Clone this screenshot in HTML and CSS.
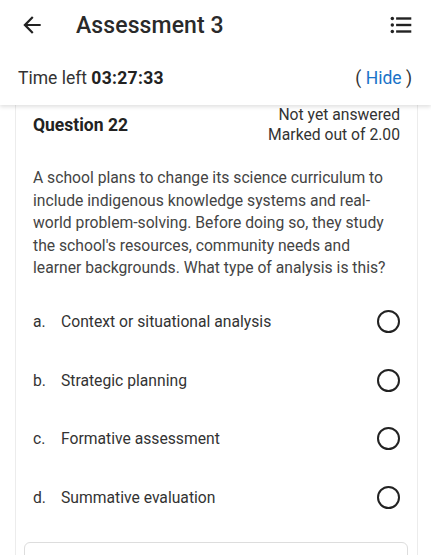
FILE: index.html
```html
<!DOCTYPE html>
<html lang="en">
<head>
    <meta charset="UTF-8">
    <meta name="viewport" content="width=device-width, initial-scale=1.0">
    <title>Assessment 3</title>
    <link rel="stylesheet" href="styles.css">
</head>
<body>
    <div class="top">
        <div class="appbar">
            <svg class="back" width="24" height="24" viewBox="0 0 24 24"><path d="M20 11H7.83l5.59-5.59L12 4l-8 8 8 8 1.41-1.41L7.83 13H20v-2z" fill="#222"/></svg>
            <h1>Assessment 3</h1>
            <svg class="list" width="24" height="24" viewBox="0 0 24 24" fill="#222">
                <circle cx="4" cy="6" r="1.6"/><circle cx="4" cy="12" r="1.6"/><circle cx="4" cy="18" r="1.6"/>
                <rect x="7.5" y="4.9" width="14" height="2.2"/><rect x="7.5" y="10.9" width="14" height="2.2"/><rect x="7.5" y="16.9" width="14" height="2.2"/>
            </svg>
        </div>
        <div class="timer">
            <span>Time left <b>03:27:33</b></span>
            <span class="hide">(&nbsp;<a href="#">Hide</a>&nbsp;)</span>
        </div>
    </div>

    <div class="card">
        <div class="qhead">
            <h2>Question 22</h2>
            <div class="state">
                <div>Not yet answered</div>
                <div>Marked out of 2.00</div>
            </div>
        </div>
        <p class="qtext">A school plans to change its science curriculum to include indigenous knowledge systems and real-world problem-solving. Before doing so, they study the school's resources, community needs and learner backgrounds. What type of analysis is this?</p>
        <div class="answers">
            <label class="answer"><span class="letter">a.</span><span class="text">Context or situational analysis</span><span class="radio"></span></label>
            <label class="answer"><span class="letter">b.</span><span class="text">Strategic planning</span><span class="radio"></span></label>
            <label class="answer"><span class="letter">c.</span><span class="text">Formative assessment</span><span class="radio"></span></label>
            <label class="answer"><span class="letter">d.</span><span class="text">Summative evaluation</span><span class="radio"></span></label>
        </div>
        <div class="bottom-box"></div>
    </div>
</body>
</html>
```

FILE: styles.css
```css
body {
    margin: 0;
    font-family: Roboto, "Liberation Sans", sans-serif;
    color: #222;
    background: #fff;
    overflow: hidden;
}
.top {
    position: relative;
    z-index: 2;
    background: #fff;
    box-shadow: 0 2px 4px rgba(0, 0, 0, 0.12);
}
.appbar {
    display: flex;
    align-items: center;
    height: 50px;
    padding: 0 17px 0 19px;
}
.appbar h1 {
    flex: 1;
    margin: 0 0 0 31px;
    font-size: 23px;
    font-weight: 500;
    color: #2a2a2a;
    letter-spacing: 0.1px;
}
.back {
    width: 26px;
    height: 26px;
}
.list {
    width: 26px;
    height: 26px;
}
.timer {
    display: flex;
    justify-content: space-between;
    align-items: center;
    height: 55px;
    padding: 0 19px 0 18px;
    font-size: 17.5px;
    color: #333;
}
.timer b {
    font-weight: 700;
    color: #222;
    letter-spacing: 0.3px;
}
.hide a {
    color: #1a73c8;
    text-decoration: none;
}
.card {
    margin: 0 13px 0 15px;
    border: 1px solid #ececec;
    border-top: none;
    padding: 0 17px 0 17px;
}
.qhead {
    display: flex;
    justify-content: space-between;
    align-items: center;
}
.qhead h2 {
    margin: 0;
    font-size: 17.5px;
    font-weight: 700;
    color: #222;
}
.state {
    text-align: right;
    font-size: 15.7px;
    line-height: 20px;
    color: #333;
}
.qtext {
    margin: 22px 0 0;
    font-size: 15.7px;
    line-height: 22.5px;
    color: #444;
}
.answers {
    margin-top: 13px;
}
.answer {
    display: flex;
    align-items: center;
    height: 58.5px;
    font-size: 15.7px;
    color: #333;
}
.letter {
    width: 28px;
}
.text {
    flex: 1;
}
.radio {
    width: 19px;
    height: 19px;
    border: 2px solid #222;
    border-radius: 50%;
}
.bottom-box {
    margin: 15px -8px 0 -9px;
    height: 40px;
    border: 1px solid #ddd;
    border-radius: 6px;
}
```
